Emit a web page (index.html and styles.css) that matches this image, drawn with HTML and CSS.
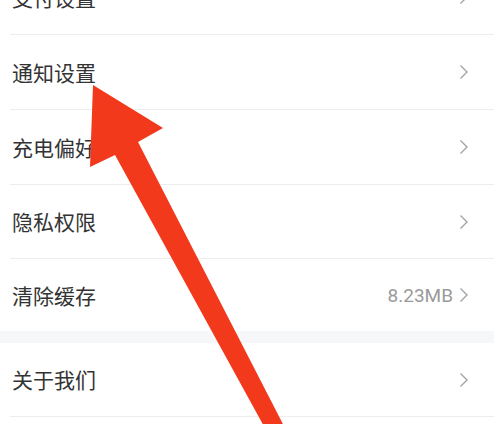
FILE: index.html
```html
<!DOCTYPE html>
<html lang="zh-CN">
<head>
<meta charset="utf-8">
<title>设置</title>
<link rel="stylesheet" href="styles.css">
</head>
<body>
<div class="screen">
  <div class="group">
    <div class="row"><span class="label">支付设置</span><span class="right"><svg class="chev" viewBox="0 0 10 16"><polyline points="1.5,1.5 8,8 1.5,14.5"/></svg></span></div>
    <div class="row"><span class="label">通知设置</span><span class="right"><svg class="chev" viewBox="0 0 10 16"><polyline points="1.5,1.5 8,8 1.5,14.5"/></svg></span></div>
    <div class="row"><span class="label">充电偏好</span><span class="right"><svg class="chev" viewBox="0 0 10 16"><polyline points="1.5,1.5 8,8 1.5,14.5"/></svg></span></div>
    <div class="row row-short"><span class="label">隐私权限</span><span class="right"><svg class="chev" viewBox="0 0 10 16"><polyline points="1.5,1.5 8,8 1.5,14.5"/></svg></span></div>
    <div class="row row-last"><span class="label">清除缓存</span><span class="right"><span class="value">8.23MB</span><svg class="chev" viewBox="0 0 10 16"><polyline points="1.5,1.5 8,8 1.5,14.5"/></svg></span></div>
  </div>
  <div class="band"></div>
  <div class="group">
    <div class="row row-about"><span class="label">关于我们</span><span class="right"><svg class="chev" viewBox="0 0 10 16"><polyline points="1.5,1.5 8,8 1.5,14.5"/></svg></span></div>
  </div>
</div>
<svg class="arrow" viewBox="0 0 494 424" width="494" height="424">
  <polygon points="93,85 163,128 138,142 286,430 266,430 115,155 90,167"/>
</svg>
</body>
</html>
```

FILE: styles.css
```css
html, body {
  margin: 0;
  padding: 0;
  background: #ffffff;
}
body {
  width: 494px;
  height: 424px;
  overflow: hidden;
  position: relative;
  font-family: "Noto Sans CJK SC", "Noto Sans", sans-serif;
}
.screen {
  margin-top: -40px;
}
.group {
  padding-left: 10px;
  background: #ffffff;
}
.row {
  height: 74px;
  display: flex;
  align-items: center;
  justify-content: space-between;
  border-bottom: 1px solid #ededed;
  padding-right: 25px;
}
.row-short {
  height: 73px;
}
.row-last {
  height: 72px;
  border-bottom: none;
}
.row-about {
  height: 73px;
}
.label {
  padding-left: 2px;
  font-size: 21px;
  color: #333333;
  line-height: 1;
}
.right {
  display: flex;
  align-items: center;
  gap: 6px;
}
.value {
  font-family: Roboto, "Noto Sans", sans-serif;
  font-size: 19px;
  color: #9a9a9a;
  line-height: 1;
}
.chev {
  width: 10px;
  height: 16px;
  fill: none;
  stroke: #a3a3a3;
  stroke-width: 1.4;
}
.band {
  height: 12px;
  background: #f6f7f8;
}
.arrow {
  position: absolute;
  left: 0;
  top: 0;
}
.arrow polygon {
  fill: #f3391c;
}
```
